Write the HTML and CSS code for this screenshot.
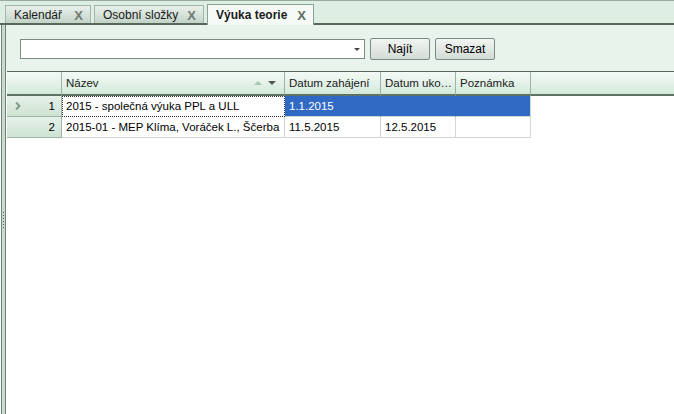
FILE: index.html
```html
<!DOCTYPE html>
<html>
<head>
    <meta charset="UTF-8">
    <title>Výuka teorie</title>
    <link rel="stylesheet" href="styles.css">
</head>
<body>
    <div class="tabs">
        <div class="tab">Kalendář <span class="close">X</span></div>
        <div class="tab">Osobní složky <span class="close">X</span></div>
        <div class="tab active">Výuka teorie <span class="close">X</span></div>
    </div>
    <div class="frame">
        <div class="splitter"><span class="grip"></span></div>
        <div class="content">
            <div class="search">
                <div class="combo"><span class="arrow"></span></div>
                <button class="btn">Najít</button>
                <button class="btn">Smazat</button>
            </div>
            <div class="grid">
                <div class="row head">
                    <div class="cell ind"></div>
                    <div class="cell c-name">Název <span class="sort"><i class="up"></i><i class="down"></i></span></div>
                    <div class="cell c-from">Datum zahájení</div>
                    <div class="cell c-to">Datum uko…</div>
                    <div class="cell c-note">Poznámka</div>
                    <div class="cell c-fill"></div>
                </div>
                <div class="row selected">
                    <div class="cell ind">
                        <svg class="mark" width="6" height="8" viewBox="0 0 6 8"><path d="M1 0.5 L4.5 4 L1 7.5" fill="none" stroke="#7f9c88" stroke-width="2"/></svg>1
                    </div>
                    <div class="cell c-name focus">2015 - společná výuka PPL a ULL</div>
                    <div class="cell c-from">1.1.2015</div>
                    <div class="cell c-to"></div>
                    <div class="cell c-note"></div>
                </div>
                <div class="row">
                    <div class="cell ind">2</div>
                    <div class="cell c-name">2015-01 - MEP Klíma, Voráček L., Ščerba</div>
                    <div class="cell c-from">11.5.2015</div>
                    <div class="cell c-to">12.5.2015</div>
                    <div class="cell c-note"></div>
                </div>
            </div>
        </div>
    </div>
</body>
</html>
```
FILE: styles.css
```css
body {
    margin: 0;
    width: 674px;
    height: 414px;
    overflow: hidden;
    font-family: "Liberation Sans", Arial, sans-serif;
    font-size: 11.5px;
    color: #000;
    background: #fff;
    display: flex;
    flex-direction: column;
}
.tabs {
    height: 19px;
    padding: 3px 0 0 5px;
    display: flex;
    gap: 3px;
    align-items: flex-end;
    background: #ddeee2;
    border-top: 1px solid #97a89c;
    border-bottom: 2px solid #56695b;
}
.tab {
    height: 18px;
    box-sizing: border-box;
    padding: 2px 7px 0 8px;
    display: flex;
    justify-content: space-between;
    border: 1px solid #a4b5a9;
    border-bottom: none;
    background: linear-gradient(#e9f1ec, #c3d3c8);
    color: #1a1a1a;
    font-size: 12px;
}
.tab:nth-child(1) { width: 86px; }
.tab:nth-child(2) { width: 110px; }
.tab.active {
    width: 107px;
    height: 21px;
    background: #f6faf7;
    font-weight: bold;
    border-color: #8fa095;
    margin-bottom: -2px;
    padding-top: 3px;
}
.close {
    font-weight: bold;
    color: #6e7a72;
    font-size: 13px;
}
.tab.active .close { color: #5e6a62; }
.frame {
    flex: 1;
    display: flex;
}
.splitter {
    width: 3px;
    margin-left: 1px;
    border-left: 1px solid #6d8574;
    border-right: 1px solid #6d8574;
    background: #c9dbcf;
    display: flex;
    align-items: center;
}
.grip {
    width: 1px;
    height: 16px;
    margin-left: 1px;
    background: repeating-linear-gradient(#4d5d52 0 1px, transparent 1px 3px);
}
.content {
    flex: 1;
    display: flex;
    flex-direction: column;
}
.search {
    height: 43px;
    padding: 13px 0 0 14px;
    box-sizing: border-box;
    display: flex;
    gap: 5px;
    background: #e8f3ec;
}
.combo {
    width: 343px;
    height: 18px;
    border: 1px solid #7b8e81;
    background: #fff;
    margin-top: 1px;
    position: relative;
}
.arrow {
    position: absolute;
    right: 4px;
    top: 8px;
    border-left: 3px solid transparent;
    border-right: 3px solid transparent;
    border-top: 3px solid #444;
}
.btn {
    width: 60px;
    height: 22px;
    font: inherit;
    font-size: 12px;
    padding: 0;
    border: 1px solid #7d8c82;
    border-radius: 2px;
    background: linear-gradient(#f2f5f3, #d3dbd6);
    color: #000;
}
.grid {
    flex: 1;
    border-top: 3px solid #e8f3ec;
    padding-left: 1px;
}
.row {
    display: flex;
    height: 21px;
}
.cell {
    box-sizing: border-box;
    height: 100%;
    padding: 4px 4px 0 4px;
    border-right: 1px solid #cfd8d2;
    border-bottom: 1px solid #cfd8d2;
    white-space: nowrap;
    overflow: hidden;
}
.head {
    height: 24px;
    border-top: 1px solid #56695b;
}
.head .cell {
    padding-top: 5px;
    background: linear-gradient(#f4faf6, #d4e9da);
    border-right: 1px solid #9fb2a5;
    border-bottom: 2px solid #5e7365;
    color: #1a1a1a;
}
.ind {
    width: 55px;
    text-align: right;
    padding-right: 6px;
    background: linear-gradient(#e6f1e9, #cde3d3);
    border-right: 1px solid #9fb2a5;
    border-bottom: 1px solid #9fb2a5;
    position: relative;
}
.head .ind { width: 55px; }
.mark {
    position: absolute;
    left: 8px;
    top: 6px;
}
.c-name { width: 223px; position: relative; }
.c-from { width: 96px; }
.c-to { width: 75px; }
.c-note { width: 75px; }
.head .c-fill { flex: 1; border-right: none; }
.sort {
    position: absolute;
    right: 8px;
    top: 9px;
    display: flex;
    gap: 6px;
}
.sort i {
    border-left: 4px solid transparent;
    border-right: 4px solid transparent;
}
.sort .up { border-bottom: 4px solid #a8c8b2; }
.sort .down { border-top: 4px solid #4f5a53; }
.selected .c-from,
.selected .c-to,
.selected .c-note {
    background: #316ac5;
    color: #fff;
    border-right-color: #316ac5;
}
.selected .c-note { border-right-color: #cfd8d2; }
.focus {
    border: 1px dotted #333;
    padding: 3px 3px 0 3px;
}
```
